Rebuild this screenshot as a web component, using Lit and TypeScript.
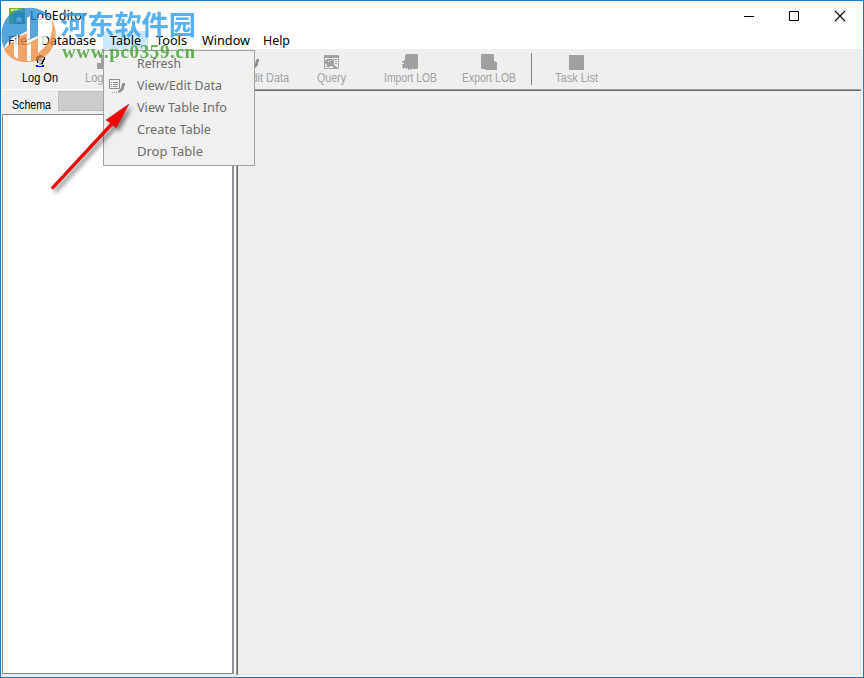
import { LitElement, html, css, svg } from "lit";
import { customElement } from "lit/decorators.js";

const menus = [
  { text: "File", w: 33, tw: 19 },
  { text: "Database", w: 69, tw: 55 },
  { text: "Table", w: 45, tw: 31, open: true },
  { text: "Tools", w: 47, tw: 31 },
  { text: "Window", w: 61, tw: 48 },
  { text: "Help", w: 40, tw: 27 },
];
const entries = [
  { text: "Refresh", tw: 44 },
  { text: "View/Edit Data", tw: 85, icon: true },
  { text: "View Table Info", tw: 90 },
  { text: "Create Table", tw: 74 },
  { text: "Drop Table", tw: 66 },
];

// One line of text fitted to a fixed advance width.
const fit = (text: string, tw: number) => html`<svg class="fit" width=${tw + 2} height="18">
  <text x="0" y="13" textLength=${tw} lengthAdjust="spacingAndGlyphs">${text}</text>
</svg>`;

const editIcon = svg`<path d="M.5 1.500h10v9h-10z" fill="#f4f4f4" stroke="#8f8f8f"/><path d="M0 1h11v1H0z" fill="#8f8f8f"/>
  <path d="M2 4.500h1m1 0h5M2 6.500h1m1 0h5M2 8.500h1m1 0h4" fill="none" stroke="#8f8f8f"/>
  <path d="M14 5h2v3h-1v3l-3 3-3 1v-2l3-3 1-4z" fill="#8f8f8f"/><path d="M3 14.500h1m1 0h1m1 0h1" stroke="#a0a0a0"/>`;

const icons: Record<string, unknown> = {
  on: svg`<g transform="translate(-1)"><path d="M5 2h2V1h4v2h1v5h-1v3H7V9H5V7H4V4h1z" fill="#aaa"/>
    <path d="M4 3h1V2h2V1h3v1h2v1H9v1H7v2H6v3H5V7H4zM12 3h1v3h-1v2h-1v2H9V9h1V7h1V5h1z" fill="#151515"/>
    <path d="M8 4h3v1H8zM7 7h2v2H7z" fill="#d6d6d6"/><path d="M4 11h2v1h4v-1h2v2H4z" fill="#0000f0"/></g>`,
  off: svg`<path d="M5 1h6v7h2v7H1V9h4z" fill="#a0a0a0"/>`,
  edit: svg`<g transform="translate(-4)">${editIcon}</g>`,
  query: svg`<g transform="translate(-1)"><path d="M.5 1.500h14v13h-14z" fill="none" stroke="#a0a0a0"/><path d="M1 2h13v2H1z" fill="#a0a0a0"/>
    <path d="M3 5h5l2 2v4l3 2v1h-3l-2-2H4l-3-3V7z" fill="#a0a0a0"/><path d="M9 5.500h4M11 7.500h2M11 9.500h2M2 12.500h4" stroke="#a0a0a0"/>
    <path d="M4 7h1v1H4zM6 6h1v1H6z" fill="#efefef"/></g>`,
  imp: svg`<path transform="translate(-1)" d="M4 0h11l1 1v13l-1 1h-4v-1h-1v2H9v-1H7v1H6v-2H5v1H4v-1H2v1H1v-2H0v-1h1v-1H0v-1h2V9H1V8H0V7h2V6h1V1h1z" fill="#a0a0a0"/>`,
  exp: svg`<path transform="translate(-1)" d="M1 0h11l1 1v6h1v1h2v8H4v-1H1l-1-1V1z" fill="#a0a0a0"/>`,
  task: svg`<path d="M0 1h15v15H0z" fill="#a0a0a0"/>`,
};
const tools = [
  { text: "Log On", w: 77, tw: 36, icon: "on", enabled: true },
  { text: "Log Off", w: 50, tw: 36, icon: "off" },
  { gap: true, w: 78 },
  { text: "View/Edit Data", w: 90, tw: 71, icon: "edit" },
  { text: "Query", w: 71, tw: 29, icon: "query" },
  { text: "Import LOB", w: 86, tw: 53, icon: "imp" },
  { text: "Export LOB", w: 71, tw: 54, icon: "exp" },
  { sep: true, w: 12 },
  { text: "Task List", w: 80, tw: 43, icon: "task" },
];

@customElement("app-root")
export class AppRoot extends LitElement {
  static styles = css`
    :host { display: block; width: 864px; height: 678px; overflow: hidden; font-family: "Noto Sans", "Noto Sans CJK SC", sans-serif; }
    * { box-sizing: border-box; }
    svg { display: block; flex: none; overflow: visible; }
    .window { position: relative; width: 864px; height: 678px; border: 1px solid #1a7bcb; background: #efefef; display: flex; flex-direction: column; }
    .fit { fill: currentColor; font-size: 12px; }
    .title { height: 30px; background: #fff; display: flex; align-items: center; padding-left: 8px; }
    .caption { margin-left: 5px; }
    .controls { margin-left: auto; }
    .menubar { height: 18px; background: #fff; display: flex; }
    .menu { height: 18px; display: flex; justify-content: center; padding-left: 2px; padding-top: 1px; }
    .open { background: #cce8ff; }
    .toolbar { height: 40px; display: flex; padding-left: 1px; }
    .tool { display: flex; flex-direction: column; align-items: center; padding-top: 5px; color: #a0a0a0; }
    .tool .fit { font-family: "Liberation Sans", sans-serif; font-size: 12px; margin-top: -1px; }
    .enabled { color: #000; }
    .edit { padding-left: 5px; }
    .sep { padding: 4px 0 0 6px; }
    .rule { width: 1px; height: 32px; background: #828282; }
    .body { flex: 1; display: flex; min-height: 0; padding: 0 1px 1px 1px; }
    .side { width: 232px; display: flex; flex-direction: column; border-top: 1px solid #fff; }
    .schema { height: 24px; display: flex; padding-left: 10px; }
    .schema .fit { font-family: "Liberation Sans", sans-serif; font-size: 12px; margin-top: 6px; }
    .combo { margin-left: 5px; flex: 1; height: 20px; margin-top: 1px; background: #ccc; border: 1px solid #bfbfbf; }
    .tree { flex: 1; background: #fff; border: 1px solid #828790; border-right: 2px solid #92959b; margin-bottom: 2px; }
    .splitter { width: 2px; background: #f8f8f8; }
    .workspace { flex: 1; border: 1px solid #a0a0a0; border-right-color: #fff; border-bottom-color: #fff; }
    .inner { height: 100%; border: 1px solid #696969; border-right-color: #e3e3e3; border-bottom-color: #e3e3e3; }
    .popup { position: absolute; left: 102px; top: 49px; width: 152px; height: 116px; border: 1px solid #a0a0a0; background: #f0f0f0; color: #6d6d6d; padding-top: 2px; }
    .entry { height: 22px; display: flex; align-items: center; padding-left: 5px; }
    .slot { width: 28px; }
    .overlay { position: absolute; left: -1px; top: -1px; pointer-events: none; }
    .cn { font-family: "Noto Sans CJK SC", sans-serif; font-size: 27px; font-weight: 700; fill: #38a3f0; opacity: .84; }
    .url { font-family: "Liberation Serif", serif; font-size: 19px; font-weight: 700; fill: #52a840; opacity: .88; }
  `;

  render() {
    return html`<div class="window">
      <div class="title">
        <svg width="16" height="16" viewBox="0 0 16 16"><path d="M0 0h16v16H0z" fill="#76b82a"/><path d="M5 5h11v11H5z" fill="#3b7c68"/><path d="M2 2h3m1 0h3m1 0h3" stroke="#d4ec9e" stroke-width="2"/><path d="M10 7l1 3 3 0-2 2 1 3-3-2-3 2 1-3-2-2h3z" fill="#fff"/></svg>
        <span class="caption">${fit("LobEditor", 57)}</span>
        <svg class="controls" width="119" height="16" viewBox="0 0 119 16"><g fill="none" stroke="#000"><path d="M0 8.500h10M45.500 3.500h9v9h-9z"/><path d="M91 3l10 10M101 3L91 13" stroke-width="1.100"/></g></svg>
      </div>
      <div class="menubar">${menus.map((m) => html`<div class="menu ${m.open ? "open" : ""}" style="width:${m.w}px">${fit(m.text, m.tw)}</div>`)}</div>
      <div class="toolbar">${tools.map((t) => t.gap
        ? html`<div style="width:${t.w}px"></div>`
        : t.sep
        ? html`<div class="sep" style="width:${t.w}px"><div class="rule"></div></div>`
        : html`<div class="tool ${t.enabled ? "enabled" : ""} ${t.icon}" style="width:${t.w}px"><svg width="16" height="16">${icons[t.icon!]}</svg>${fit(t.text!, t.tw!)}</div>`)}</div>
      <div class="body">
        <div class="side">
          <div class="schema">${fit("Schema", 39)}<div class="combo"></div></div>
          <div class="tree"></div>
        </div>
        <div class="splitter"></div>
        <div class="workspace"><div class="inner"></div></div>
      </div>
      <div class="popup">${entries.map((e) => html`<div class="entry"><div class="slot">${e.icon ? html`<svg width="16" height="16">${editIcon}</svg>` : ""}</div>${fit(e.text, e.tw)}</div>`)}</div>
      <svg class="overlay" width="220" height="200">
        <defs><filter id="shade" x="-20%" y="-20%" width="150%" height="150%"><feDropShadow dx="3" dy="3" stdDeviation="2" flood-color="#000" flood-opacity=".5"/></filter></defs>
        <g opacity=".76">
          <path d="M2 42C-1 24 9 8 27 8C38 7 47 12 52 20C46 15 42 14 38 14V36L28 40V20L18 24V34C12 38 6 42 4 49z" fill="#2088cf"/>
          <path d="M52 20C62 38 51 61 29 62C18 63 8 58 4 49C8 45 13 41 18 39V50L27 48V44L38 38V53C48 46 54 34 52 20z" fill="#f08c3f"/>
          <path d="M14 40L18 38V59L14 56zM27 18L30 16V38L27 40zM38 18L46 18C50 30 46 44 38 53zM27 46L31 43V61H27z" fill="#fff"/>
          <path d="M18 37L27 33V60L18 58z" fill="#f08c3f"/>
          <path d="M18 20L27 16V31L18 36zM30 16L38 14V35L30 39z" fill="#2088cf"/>
          <path d="M31 42L38 38V55L31 59z" fill="#f08c3f"/>
        </g>
        <text class="cn" x="60" y="35" textLength="136" lengthAdjust="spacingAndGlyphs">河东软件园</text>
        <text class="url" x="62" y="58" textLength="133" lengthAdjust="spacing">www.pc0359.cn</text>
        <path d="M51 187.500L110.500 123L106 120L129 104L116 128L113 125L53 189.500z" fill="#fb0000" stroke="#a02020" stroke-width=".5" filter="url(#shade)"/>
      </svg>
    </div>`;
  }
}
